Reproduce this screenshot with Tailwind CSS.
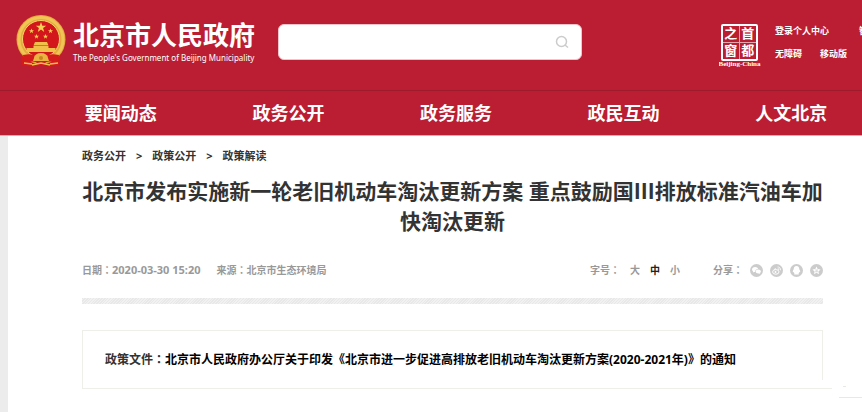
<!DOCTYPE html>
<html lang="zh-CN">
<head>
    <meta charset="UTF-8">
    <meta name="viewport" content="width=device-width, initial-scale=1.0">
    <title>北京市人民政府</title>
    <script src="https://cdn.jsdelivr.net/npm/@tailwindcss/browser@4"></script>
</head>
<body class="bg-white text-[#333] font-bold font-['Noto_Sans','Noto_Sans_CJK_SC',sans-serif] min-h-screen flex flex-col overflow-hidden">
    <!-- 页头 -->
    <header class="bg-[#bb1e32] text-white border-b border-[#e9a5ae]">
        <div class="h-[91px] flex items-start pl-4 border-b border-[#9c1c2c]">
            <a href="#" class="flex items-start w-[262px] shrink-0 pt-[15px] gap-[7px]">
                <svg class="w-[50px] h-[53px] shrink-0" viewBox="0 0 50 53">
                    <path d="M5 36 L6 50 L16 52 L25 50 L34 52 L43 50 L45 36Z" fill="#d31a1d"/>
                    <circle cx="25" cy="24.500" r="24.500" fill="#e3aa3c"/>
                    <circle cx="25" cy="24.500" r="22" fill="none" stroke="#f0c556" stroke-width="3"/>
                    <circle cx="25" cy="24" r="18.500" fill="#d3161b" stroke="#f5d269" stroke-width="1"/>
                    <path fill="#f8ce55" d="M25 7l1.300 3.700h3.900l-3.100 2.400 1.100 3.800-3.200-2.300-3.200 2.300 1.100-3.800-3.100-2.400h3.900z"/>
                    <path fill="#f8ce55" d="M15.500 13.500l.7 1.700h1.800l-1.500 1.200.6 1.800-1.600-1.100-1.600 1.100.6-1.800-1.500-1.200h1.800zM34.500 13.500l.7 1.700h1.800l-1.500 1.200.6 1.800-1.600-1.100-1.600 1.100.6-1.800-1.500-1.200h1.800zM20.500 19l.7 1.700h1.800l-1.500 1.200.6 1.800-1.600-1.100-1.600 1.100.6-1.800-1.500-1.200h1.800zM29.500 19l.7 1.700h1.800l-1.500 1.200.6 1.800-1.600-1.100-1.600 1.100.6-1.800-1.500-1.200h1.800z"/>
                    <path d="M19 27h12l1.500 3.500h-15zM17.500 31h15v2h7v4h-29v-4h7z" fill="#f2c04a"/>
                    <path d="M7 40 Q17 38 21 42 H29 Q33 38 43 40 L42 48 Q31 45 29 48 H21 Q19 45 8 48Z" fill="#d31a1d"/>
                    <path d="M18 43a7 5 0 0 1 14 0l1 3h-16z" fill="#e9b540"/>
                    <circle cx="25" cy="43" r="2" fill="#c8861f"/>
                    <path d="M8 48l8 1M42 48l-8 1M16 50l9-2 9 2" fill="none" stroke="#f1c04b" stroke-width="1.500"/>
                </svg>
                <div class="whitespace-nowrap pt-[5px]">
                    <div class="text-[26px] leading-[30px]">北京市人民政府</div>
                    <div class="text-[8px] leading-[16px] font-normal">The People's Government of Beijing Municipality</div>
                </div>
            </a>
            <form class="relative mt-6 flex-1 max-w-[304px]">
                <input type="text" aria-label="搜索" class="block w-full h-9 rounded-md bg-white border border-[#f0c4ca] pl-3 pr-10 text-sm text-[#333] outline-none">
                <button type="button" aria-label="搜索" class="absolute right-[13px] top-[11px]">
                    <svg class="w-[14px] h-[14px]" viewBox="0 0 14 14" fill="none" stroke="#ccc" stroke-width="1.500">
                        <circle cx="6.500" cy="6.500" r="5"/>
                        <path d="M10 10l3 2.500"/>
                    </svg>
                </button>
            </form>
            <div class="ml-auto w-[143px] shrink-0 flex overflow-hidden pt-6">
                <a href="#" class="w-[41px] shrink-0 flex flex-col items-center">
                    <div class="w-[37px] h-[37px] border-2 border-white rounded-[2px] grid grid-cols-2 text-[13px] leading-[15px] text-center">
                        <span class="border-r border-b border-white/60">之</span>
                        <span class="border-b border-white/60">首</span>
                        <span class="border-r border-white/60">窗</span>
                        <span>都</span>
                    </div>
                    <div class="text-[7px] leading-[7px] whitespace-nowrap font-['Liberation_Serif',serif]">Beijing-China</div>
                </a>
                <div class="ml-[15px] text-[9px] leading-[14px] whitespace-nowrap">
                    <div class="flex gap-[30px]"><a href="#">登录个人中心</a><a href="#">智能问答</a></div>
                    <div class="flex gap-[18px] mt-[9px]"><a href="#">无障碍</a><a href="#">移动版</a></div>
                </div>
            </div>
        </div>
        <nav class="grid grid-cols-5 ml-[37px] -mr-[13px] h-11 items-center text-center text-[18px] leading-[26px]">
            <a href="#">要闻动态</a>
            <a href="#">政务公开</a>
            <a href="#">政务服务</a>
            <a href="#">政民互动</a>
            <a href="#">人文北京</a>
        </nav>
    </header>

    <main class="relative flex-1 border-l-8 border-[#ececec] pl-[74px] pr-[39px]">
        <!-- 面包屑 -->
        <div class="flex text-[11px] leading-[16px] pt-3 gap-[10px]">
            <a href="#">政务公开</a><span>&gt;</span>
            <a href="#">政策公开</a><span>&gt;</span>
            <a href="#">政策解读</a>
        </div>

        <h1 class="mt-3 text-[21px] leading-[30px] text-center whitespace-nowrap">北京市发布实施新一轮老旧机动车淘汰更新方案 重点鼓励国Ⅲ排放标准汽油车加<br>快淘汰更新</h1>

        <div class="mt-[26px] flex items-center text-[10px] leading-[16px] text-[#999]">
            <span>日期<span lang="zh-TW" class="font-['Noto_Sans_CJK_TC',sans-serif]">：</span><span class="text-[11px]">2020-03-30 15:20</span></span>
            <span class="ml-4">来源<span lang="zh-TW" class="font-['Noto_Sans_CJK_TC',sans-serif]">：</span>北京市生态环境局</span>
            <span class="ml-auto">字号<span lang="zh-TW" class="font-['Noto_Sans_CJK_TC',sans-serif]">：</span></span>
            <div class="flex gap-[10px] ml-[10px]">
                <button type="button">大</button>
                <button type="button" class="text-[#222]">中</button>
                <button type="button">小</button>
            </div>
            <span class="ml-[33px]">分享<span lang="zh-TW" class="font-['Noto_Sans_CJK_TC',sans-serif]">：</span></span>
            <div class="flex gap-[7px] ml-[7px]">
                <a href="#" aria-label="微信"><svg class="w-[13px] h-[13px]" viewBox="0 0 13 13">
                    <circle cx="6.500" cy="6.500" r="6.500" fill="#ccc"/>
                    <path d="M5.200 3C3.300 3 2 4.100 2 5.500c0 .8.400 1.500 1.100 1.900L2.900 8.500l1.200-.6 1 .1C5 6 6.300 5 8.200 5 7.900 3.800 6.700 3 5.200 3zM8.300 5.600C6.700 5.600 5.700 6.500 5.700 7.600s1.100 2 2.600 2l.9-.1 1 .5-.2-.9c.6-.4.9-.9.900-1.500 0-1.100-1.100-2-2.600-2z" fill="#fff"/>
                </svg></a>
                <a href="#" aria-label="微博"><svg class="w-[13px] h-[13px]" viewBox="0 0 13 13">
                    <circle cx="6.500" cy="6.500" r="6.500" fill="#ccc"/>
                    <ellipse cx="5.800" cy="7.900" rx="3.200" ry="2.300" fill="none" stroke="#fff"/>
                    <circle cx="5.500" cy="8" r="1" fill="#fff"/>
                    <path d="M7.500 3a2.600 2.600 0 0 1 2.900 3.300M7.700 4.700a1 1 0 0 1 1.100 1.300M4 5.500l2-1" fill="none" stroke="#fff" stroke-width=".8"/>
                </svg></a>
                <a href="#" aria-label="QQ"><svg class="w-[13px] h-[13px]" viewBox="0 0 13 13">
                    <circle cx="6.500" cy="6.500" r="6.500" fill="#ccc"/>
                    <path d="M6.500 2C4.500 2 3.700 3.400 3.700 5.200 3 6.200 2.600 7.300 2.900 8.300l.7-.4c.2.700.5 1.100.9 1.500-.5.300-.5 1 .2 1.200h3.600c.7-.2.700-.9.200-1.200.4-.4.700-.8.900-1.500l.7.400c.3-1-.1-2.100-.8-3.100C9.300 3.400 8.500 2 6.500 2z" fill="#fff"/>
                </svg></a>
                <a href="#" aria-label="QQ空间"><svg class="w-[13px] h-[13px]" viewBox="0 0 13 13">
                    <circle cx="6.500" cy="6.500" r="6.500" fill="#ccc"/>
                    <path d="M6.500 2.400l1.200 2.700 2.900.300-2.200 2 .6 2.900-2.500-1.500L4 10.300l.6-2.900-2.200-2 2.900-.3z" fill="#fff"/>
                    <path d="M5.200 6h2.500L5.500 7.700H8" fill="none" stroke="#ccc" stroke-width=".7"/>
                </svg></a>
            </div>
        </div>

        <div class="mt-5 h-[6px] bg-[repeating-linear-gradient(135deg,#e8e8e8_0_1px,#f1f1f1_1px_2px)]"></div>

        <!-- 政策文件 -->
        <div class="relative mt-[26px] h-[59px] flex items-center pl-[22px] text-[12px] leading-[18px] whitespace-nowrap border-t border-l border-[#efefe9]">
            <span>政策文件<span lang="zh-TW" class="font-['Noto_Sans_CJK_TC',sans-serif] leading-none">：</span></span>
            <a href="#" class="text-black">北京市人民政府办公厅关于印发《北京市进一步促进高排放老旧机动车淘汰更新方案(2020-2021年)》的通知</a>
            <span class="absolute right-0 top-0 h-[49px] w-px bg-[#efefe9]"></span>
            <span class="absolute left-0 -right-[9px] bottom-0 h-px bg-[#efefe9]"></span>
        </div>
        <span class="absolute right-[16px] top-[250px] w-[3px] h-px bg-[#e9e9e3]"></span>
        <span class="absolute right-0 top-[261px] w-[23px] h-px bg-[#e9e9e3]"></span>
    </main>
</body>
</html>
